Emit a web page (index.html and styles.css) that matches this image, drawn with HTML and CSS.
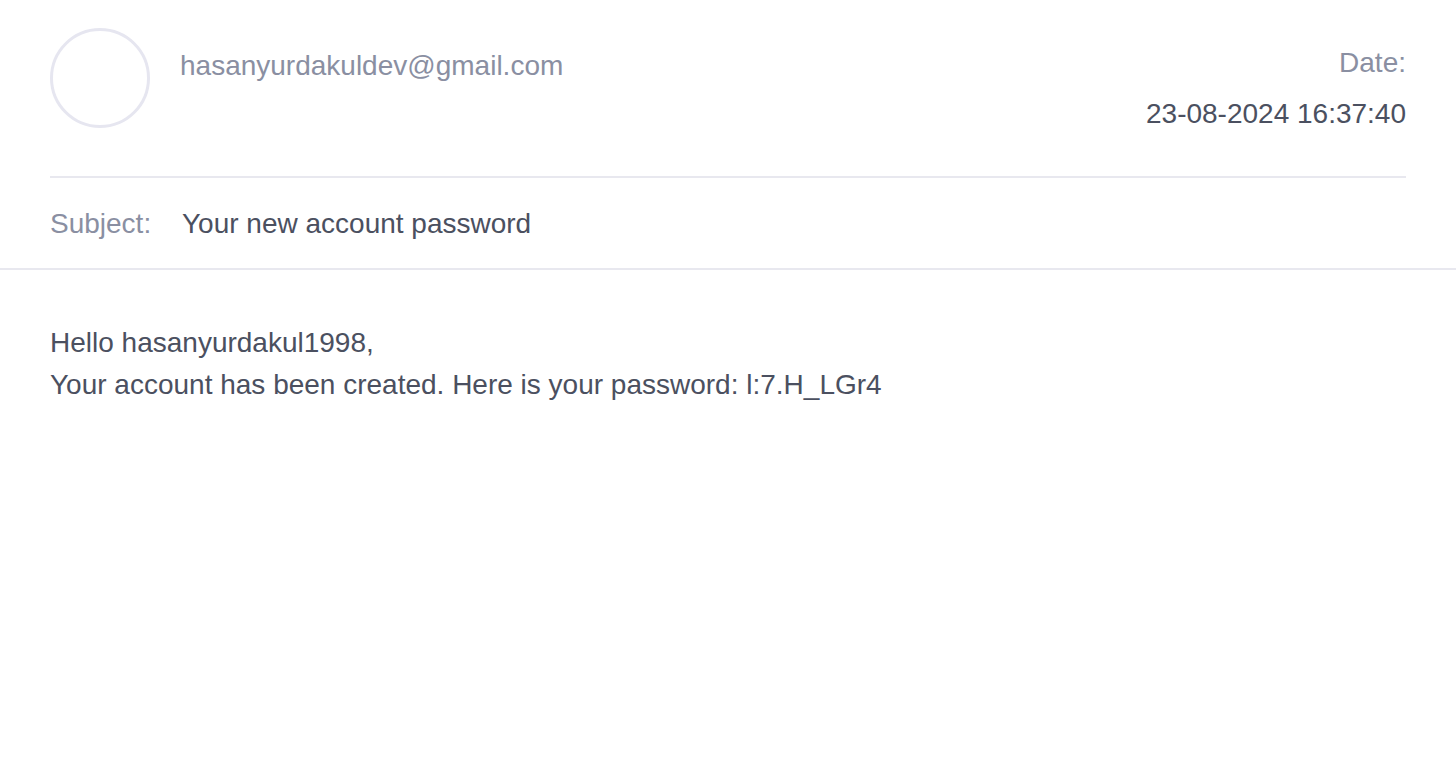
FILE: index.html
```html
<!DOCTYPE html>
<html>
<head>
<meta charset="utf-8">
<link rel="stylesheet" href="styles.css">
</head>
<body>
<div class="mail">
  <div class="head">
    <div class="from">
      <div class="avatar"></div>
      <div class="email">hasanyurdakuldev@gmail.com</div>
    </div>
    <div class="date">
      <div class="date-label">Date:</div>
      <div class="date-value">23-08-2024 16:37:40</div>
    </div>
  </div>
  <div class="subject">
    <span class="subject-label">Subject:</span>
    <span class="subject-value">Your new account password</span>
  </div>
  <div class="content">
    <p>Hello hasanyurdakul1998,</p>
    <p>Your account has been created. Here is your password: l:7.H_LGr4</p>
  </div>
</div>
</body>
</html>
```

FILE: styles.css
```css
html, body {
  margin: 0;
  padding: 0;
  background: #ffffff;
}
body {
  font-family: "Liberation Sans", Arial, sans-serif;
  font-size: 28px;
  line-height: 32px;
  color: #4b5060;
}
.mail {
  width: 1456px;
}
.head {
  margin: 0 50px;
  padding: 28px 0 46px;
  display: flex;
  justify-content: space-between;
  border-bottom: 2px solid #e8e8ef;
}
.from {
  display: flex;
  align-items: flex-start;
}
.avatar {
  width: 100px;
  height: 100px;
  box-sizing: border-box;
  border: 3px solid #e6e6f0;
  border-radius: 50%;
}
.email {
  margin-left: 30px;
  margin-top: 22px;
  color: #8a8fa2;
}
.date {
  text-align: right;
  padding-top: 19px;
}
.date-label {
  color: #8a8fa2;
}
.date-value {
  margin-top: 19px;
  color: #4b5060;
}
.subject {
  display: flex;
  padding: 30px 50px 28px;
  border-bottom: 2px solid #e8e8ef;
}
.subject-label {
  color: #8a8fa2;
  width: 132px;
}
.subject-value {
  color: #4b5060;
}
.content {
  padding: 52px 50px;
}
.content p {
  margin: 0;
  line-height: 42px;
}
```
